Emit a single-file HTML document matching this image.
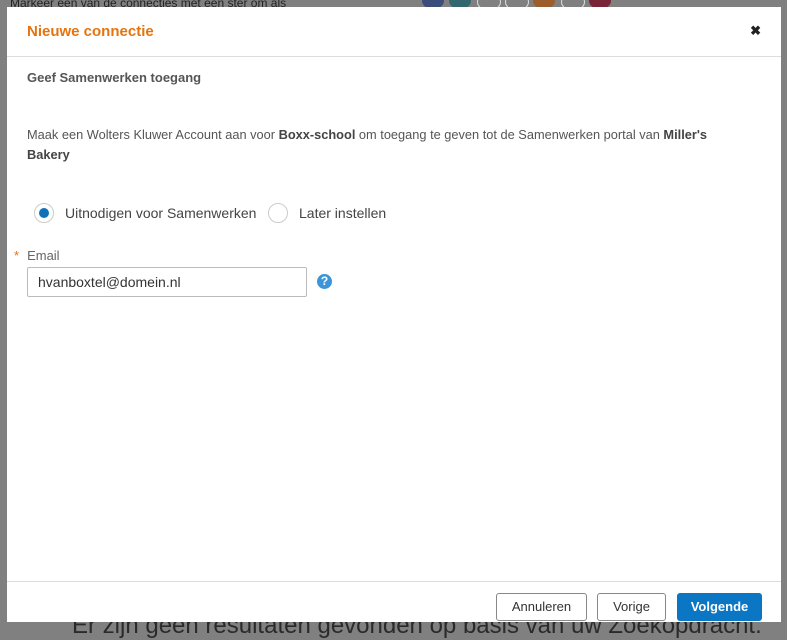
<!DOCTYPE html>
<html><head><meta charset="utf-8"><style>
body{margin:0;width:787px;height:638px;background:#808080;position:relative;overflow:hidden;font-family:"Liberation Sans",Arial,sans-serif}
.bg1{position:absolute;left:10px;top:-4px;font-size:12px;color:#222}
.bg2{position:absolute;left:72px;top:612px;font-size:24px;color:#2a2a2a;white-space:nowrap}
.dot{position:absolute;top:-7px;width:22px;height:16px;border-radius:50%}
.modal{position:absolute;left:7px;top:7px;width:774px;height:615px;background:#fff}
.hd{height:49px;border-bottom:1px solid #dcdcdc;position:relative}
.title{position:absolute;left:20px;top:16px;color:#e5740e;font-size:15px;font-weight:bold}
.x{position:absolute;right:20px;top:16px;font-size:13px;font-weight:bold;color:#222}
.sub{position:absolute;left:20px;top:63px;font-size:13px;font-weight:bold;color:#555}
.desc{position:absolute;left:20px;top:118px;width:720px;font-size:12.8px;line-height:20px;color:#555}
.desc b{color:#444}
.radio{position:absolute;top:196px;width:20px;height:20px;border:1px solid #ccc;border-radius:50%;box-sizing:border-box;background:#fff}
.radio.on::after{content:"";position:absolute;left:4px;top:4px;width:10px;height:10px;border-radius:50%;background:#0f72b8}
.rl{position:absolute;top:198px;font-size:14px;color:#444}
.lab{position:absolute;left:7px;top:241px;font-size:13px;color:#666}
.lab span{color:#e5740e;margin-right:8px}
.inp{position:absolute;left:20px;top:260px;width:280px;height:30px;box-sizing:border-box;border:1px solid #bbb;border-radius:2px;font-size:14px;color:#333;line-height:28px;padding-left:10px}
.help{position:absolute;left:310px;top:267px;width:15px;height:15px;border-radius:50%;background:#3a96d8;color:#fff;font-size:12px;font-weight:bold;text-align:center;line-height:15px}
.ft{position:absolute;left:0;top:574px;width:774px;border-top:1px solid #dcdcdc}
.btn{position:absolute;top:586px;height:28px;box-sizing:border-box;border:1px solid #888;border-radius:3px;font-size:13px;color:#333;text-align:center;line-height:26px;background:#fff}
.btn.p{background:#0a76c4;border-color:#0a76c4;color:#fff;font-weight:bold}
</style></head><body>
<div class="bg1">Markeer één van de connecties met een ster om als</div>
<div class="dot" style="left:422px;background:#3b4d7a"></div>
<div class="dot" style="left:449px;background:#336770"></div>
<div class="dot" style="left:477px;border:1px solid #ddd"></div>
<div class="dot" style="left:505px;border:1px solid #ddd"></div>
<div class="dot" style="left:533px;background:#9c5d2a"></div>
<div class="dot" style="left:561px;border:1px solid #ddd"></div>
<div class="dot" style="left:589px;background:#7a2336"></div>
<div class="bg2">Er zijn geen resultaten gevonden op basis van uw Zoekopdracht.</div>
<div class="modal">
<div class="hd"><div class="title">Nieuwe connectie</div><div class="x">✖</div></div>
<div class="sub">Geef Samenwerken toegang</div>
<div class="desc">Maak een Wolters Kluwer Account aan voor <b>Boxx-school</b> om toegang te geven tot de Samenwerken portal van <b>Miller's<br>Bakery</b></div>
<div class="radio on" style="left:27px"></div><div class="rl" style="left:58px">Uitnodigen voor Samenwerken</div>
<div class="radio" style="left:261px"></div><div class="rl" style="left:292px">Later instellen</div>
<div class="lab"><span>*</span>Email</div>
<div class="inp">hvanboxtel@domein.nl</div>
<div class="help">?</div>
<div class="ft"></div>
<div class="btn" style="left:489px;width:91px">Annuleren</div>
<div class="btn" style="left:590px;width:69px">Vorige</div>
<div class="btn p" style="left:670px;width:85px">Volgende</div>
</div>
</body></html>
